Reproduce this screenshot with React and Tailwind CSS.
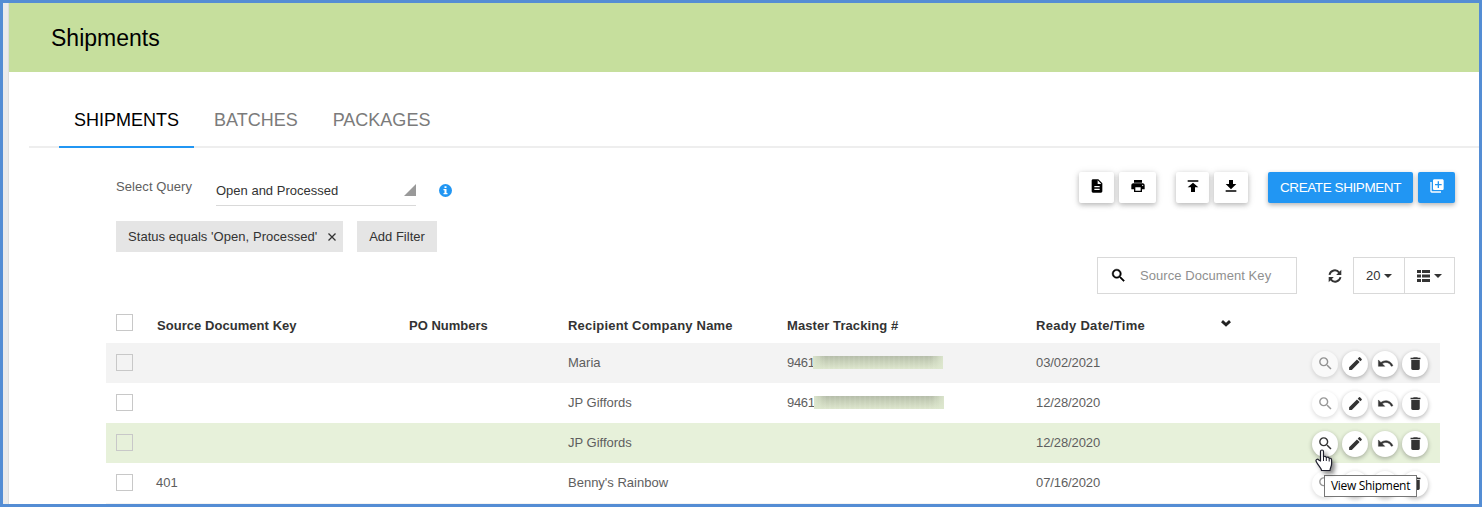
import React from "react";

const PATHS = {
  doc: "M14 2H6c-1.100 0-2 .9-2 2v16c0 1.100.9 2 2 2h12c1.100 0 2-.9 2-2V8l-6-6zm2 16H8v-2h8v2zm0-4H8v-2h8v2zm-3-5V3.500L18.500 9H13z",
  print: "M19 8H5c-1.660 0-3 1.340-3 3v6h4v4h12v-4h4v-6c0-1.660-1.340-3-3-3zm-3 11H8v-5h8v5zm3-7c-.55 0-1-.45-1-1s.45-1 1-1 1 .45 1 1-.45 1-1 1zm-1-9H6v4h12V3z",
  upload: "M4 3.500v2h16v-2H4zm0 10.500h5v7h6v-7h5l-8-7-8 7z",
  download: "M20 9h-5V3H9v6H4l8 8 8-8zM4 18.500v2h16v-2H4z",
  add: "M4 6H2v14c0 1.100.9 2 2 2h14v-2H4V6zm16-4H8c-1.100 0-2 .9-2 2v12c0 1.100.9 2 2 2h12c1.100 0 2-.9 2-2V4c0-1.100-.9-2-2-2zm-1 9h-4v4h-2v-4H9V9h4V5h2v4h4v2z",
  search: "M15.500 14h-.79l-.28-.27A6.471 6.471 0 0 0 16 9.500 6.500 6.500 0 1 0 9.500 16c1.610 0 3.090-.59 4.230-1.570l.27.28v.79l5 4.990L20.490 19l-4.990-5zm-6 0C7.010 14 5 11.990 5 9.500S7.010 5 9.500 5 14 7.010 14 9.500 11.990 14 9.500 14z",
  edit: "M3 17.250V21h3.750L17.810 9.940l-3.750-3.750L3 17.250zM20.710 7.040a1 1 0 0 0 0-1.410l-2.340-2.340a1 1 0 0 0-1.410 0l-1.830 1.830 3.750 3.750 1.830-1.830z",
  undo: "M12.500 8c-2.650 0-5.050.99-6.900 2.600L2 7v9h9l-3.620-3.620c1.390-1.160 3.160-1.880 5.120-1.880 3.540 0 6.550 2.310 7.600 5.500l2.370-.78C21.080 11.030 17.150 8 12.500 8z",
  trash: "M6 19c0 1.100.9 2 2 2h8c1.100 0 2-.9 2-2V7H6v12zM19 4h-3.500l-1-1h-5l-1 1H5v2h14V4z",
};

function Icon({ name, className }) {
  return (
    <svg viewBox="0 0 24 24" fill="currentColor" className={className} aria-hidden="true">
      <path d={PATHS[name]} />
    </svg>
  );
}

function ToolButton({ icon, className }) {
  return (
    <button className={`flex h-[31px] justify-center rounded-[2px] bg-white pt-[6px] text-black shadow-[0_2px_5px_rgba(0,0,0,0.22),0_1px_8px_rgba(0,0,0,0.1)] ${className}`}>
      <Icon name={icon} className="size-4" />
    </button>
  );
}

function Caret() {
  return <span className="h-0 w-0 border-x-4 border-t-4 border-x-transparent border-t-[#333]" />;
}

function Checkbox() {
  return <span className="block size-[17px] border border-[#c8c8c8]" />;
}

const TRACKING_BAR = "relative mb-[2px] h-[13px] w-[130px] bg-[linear-gradient(90deg,rgba(222,232,207,0.9)_0%,transparent_9%,transparent_90%,rgba(222,232,207,0.9)_100%),repeating-linear-gradient(90deg,rgba(255,255,255,0.06)_0_2px,transparent_2px_5px),linear-gradient(180deg,#b5bda9_0%,#c8d1b9_45%,#dde6cd_100%)]";

function ActionButton({ icon, dim }) {
  return (
    <button className={`flex size-[26px] items-center justify-center rounded-full bg-white text-[#333] shadow-[0_2px_5px_rgba(0,0,0,0.2),0_1px_4px_rgba(0,0,0,0.1)] ${dim ? "opacity-50" : ""}`}>
      <Icon name={icon} className={icon === "undo" ? "size-[17px] stroke-current stroke-[0.6]" : "size-[17px]"} />
    </button>
  );
}

const GRID = "grid grid-cols-[51px_252px_159px_219px_249px_276px_1fr]";

const ROWS = [
  { key: "", company: "Maria", tracking: "9461", date: "03/02/2021", bg: "bg-[#f3f3f3]", bar: "ml-[26px]" },
  { key: "", company: "JP Giffords", tracking: "9461", date: "12/28/2020", bg: "bg-white", bar: "ml-[27px]" },
  { key: "", company: "JP Giffords", tracking: "", date: "12/28/2020", bg: "bg-[#e7f1da]", hover: true },
  { key: "401", company: "Benny's Rainbow", tracking: "", date: "07/16/2020", bg: "bg-white" },
];

function Row({ row }) {
  return (
    <div className={`${GRID} h-10 shrink-0 items-center text-[#5e5e5e] ${row.bg}`}>
      <div className="pb-[2px] pl-[10px]"><Checkbox /></div>
      <div className="-ml-px">{row.key}</div>
      <div />
      <div>{row.company}</div>
      <div className="flex items-center">
        <span className="w-0 tracking-[-0.35px]">{row.tracking}</span>
        {row.tracking && <span className={`${TRACKING_BAR} ${row.bar}`} />}
      </div>
      <div className="tracking-[-0.1px]">{row.date}</div>
      <div className="relative flex gap-1 pt-px">
        <ActionButton icon="search" dim={!row.hover} />
        <ActionButton icon="edit" />
        <ActionButton icon="undo" />
        <ActionButton icon="trash" />
        {row.hover && (
          <>
            <svg viewBox="0 0 20 26" className="absolute top-[17px] left-[2px] z-20 h-[26px] w-5 drop-shadow-[3px_3px_2px_rgba(0,0,0,0.45)]" aria-hidden="true">
              <path d="M6.500 14V4.500C6.500 2.500 9.500 2.500 9.500 4.500V10C10.500 8.700 12 9.200 12.300 10.700C13.500 9.500 14.900 10.200 15.200 11.500C16.500 10.800 17.600 11.700 17.600 13V17C17.600 19.500 16 21 16 23.500H7.500C7.500 21 4 18.500 2.200 14.500C1.300 12.500 3.500 11.500 4.800 13Z" fill="#fff" stroke="#1d1d2b" strokeWidth="1.200" strokeLinejoin="round" />
              <path d="M9.500 10v4M12.300 11v3M15.200 12v2.500" stroke="#1d1d2b" strokeWidth="1" />
            </svg>
            <div className="absolute top-[45px] left-3 z-10 flex h-[22px] w-[93px] items-center justify-center border border-[#767676] bg-white pt-px font-['Open_Sans','Noto_Sans',sans-serif] text-[12px] tracking-[-0.3px] whitespace-nowrap text-black">
              View Shipment
            </div>
          </>
        )}
      </div>
    </div>
  );
}

export default function App() {
  return (
    <div className="flex h-[507px] w-[1482px] overflow-hidden border-[3px] border-[#548dd4] bg-white font-['Liberation_Sans',Arial,sans-serif] text-[13px] leading-[18px] text-[#333]">
      <div className="w-[6px] shrink-0 border-r border-[#dedede] bg-[#ebebeb]" />
      <main className="flex min-w-0 flex-1 flex-col">
        <header className="flex h-[69px] shrink-0 items-center bg-[#c6df9d] pl-[42px]">
          <h1 className="text-[23px] leading-7 text-black">Shipments</h1>
        </header>

        <nav className="ml-5 flex h-[76px] shrink-0 items-end border-b-2 border-[#eeeeee] pl-[30px] text-[18px] text-[#7b7b7b]">
          <a className="-mb-[2px] flex h-[57px] w-[135px] items-center justify-center border-b-2 border-[#2196f3] pt-[2px] text-black">SHIPMENTS</a>
          <a className="ml-5 flex h-[55px] items-center pt-[2px]">BATCHES</a>
          <a className="ml-[35px] flex h-[55px] items-center pt-[2px]">PACKAGES</a>
        </nav>

        <section className="flex h-[104px] shrink-0 justify-between pr-6 pl-[107px]">
          <div>
            <div className="flex h-[73px] pt-[24px]">
              <span className="w-[100px] pt-[6px] tracking-[0.08px] text-[#5e5e5e]">Select Query</span>
              <div className="flex h-[34px] w-[200px] items-center justify-between border-b border-[#d9d9d9] pt-[3px]">
                <span className="pt-px">Open and Processed</span>
                <svg viewBox="0 0 12 12" className="size-3 text-[#999]" aria-hidden="true"><path d="M12 0v12H0z" fill="currentColor" /></svg>
              </div>
              <svg viewBox="0 0 13 13" className="mt-[12px] ml-[23px] size-[13px]" aria-hidden="true">
                <circle cx="6.500" cy="6.500" r="6.500" fill="#2196f3" />
                <path d="M5.500 2.300h2v1.700h-2zM4.500 5h3v4h1v1.200h-4V9h1V6.200h-1z" fill="#fff" />
              </svg>
            </div>
            <div className="flex gap-[14px]">
              <div className="flex h-[31px] w-[227px] items-center bg-[#e5e5e5] pl-3">
                <span className="w-[200px] tracking-[0.05px] whitespace-nowrap">Status equals 'Open, Processed'</span>
                <svg viewBox="0 0 8 8" className="size-2" aria-hidden="true"><path d="M.5.5l7 7M7.500.5l-7 7" stroke="#333" strokeWidth="1.300" /></svg>
              </div>
              <button className="h-[31px] w-20 bg-[#e5e5e5]">Add Filter</button>
            </div>
          </div>
          <div className="flex pt-6">
            <ToolButton icon="doc" className="w-[35px]" />
            <ToolButton icon="print" className="ml-[5px] w-[37px]" />
            <ToolButton icon="upload" className="ml-5 w-[33px]" />
            <ToolButton icon="download" className="ml-[5px] w-[34px]" />
            <button className="ml-5 h-[31px] w-[145px] rounded-[2px] bg-[#2196f3] text-[13.500px] tracking-[-0.42px] whitespace-nowrap text-white shadow-[0_2px_5px_rgba(0,0,0,0.3)]">CREATE SHIPMENT</button>
            <button className="ml-[5px] flex h-[31px] w-[37px] justify-center rounded-[2px] bg-[#2196f3] pt-[6px] text-white shadow-[0_2px_5px_rgba(0,0,0,0.3)]">
              <Icon name="add" className="size-4" />
            </button>
          </div>
        </section>

        <section className="flex h-[51px] shrink-0 justify-end pt-[5px] pr-6">
          <div className="flex h-[37px] w-[200px] items-center border border-[#d9d9d9] pl-[12px]">
            <Icon name="search" className="size-[17px] stroke-current stroke-[0.7] text-black" />
            <span className="ml-[13px] tracking-[0.06px] text-[#8f8f8f]">Source Document Key</span>
          </div>
          <svg viewBox="0 0 14 14" className="mt-[12px] ml-[31px] size-[14px]" aria-hidden="true">
            <path d="M1.500 5.800A5.400 5.400 0 0 1 11.200 3.600M12.500 8.200A5.400 5.400 0 0 1 2.800 10.400" fill="none" stroke="#333" strokeWidth="1.900" />
            <path d="M13.300.8v5.200H8.200zM.7 13.200V8h5.100z" fill="#333" />
          </svg>
          <div className="ml-[11px] flex h-[37px] w-[102px] border border-[#d9d9d9]">
            <div className="flex w-[51px] items-center gap-1 border-r border-[#d9d9d9] pl-3"><span>20</span><Caret /></div>
            <div className="flex items-center gap-1 pl-3">
              <svg viewBox="0 0 13 12" className="h-3 w-[13px]" fill="#333" aria-hidden="true"><path d="M0 0h4v3H0zM5 0h8v3H5zM0 4.500h4v3H0zM5 4.500h8v3H5zM0 9h4v3H0zM5 9h8v3H5z" /></svg>
              <Caret />
            </div>
          </div>
        </section>

        <section className="mr-[39px] ml-[97px] flex h-[201px] shrink-0 flex-col overflow-hidden">
          <div className={`${GRID} h-10 shrink-0 items-center font-bold`}>
            <div className="pb-[2px] pl-[10px]"><Checkbox /></div>
            <div className="pt-[5px] tracking-[0.05px]">Source Document Key</div>
            <div className="pt-[5px]">PO Numbers</div>
            <div className="pt-[5px] tracking-[0.2px]">Recipient Company Name</div>
            <div className="pt-[5px] tracking-[0.08px]">Master Tracking #</div>
            <div className="flex justify-between pt-[5px] pr-[81px]">
              <span className="tracking-[0.3px]">Ready Date/Time</span>
              <svg viewBox="0 0 10 7" className="mt-[3px] h-[7px] w-[10px]" aria-hidden="true"><path d="M1 1.200l4 3.600 4-3.600" fill="none" stroke="#222" strokeWidth="2.900" /></svg>
            </div>
          </div>
          {ROWS.map((row, i) => <Row key={i} row={row} />)}
          <div className="h-10 shrink-0 bg-[#f3f3f3]" />
        </section>
      </main>
    </div>
  );
}
